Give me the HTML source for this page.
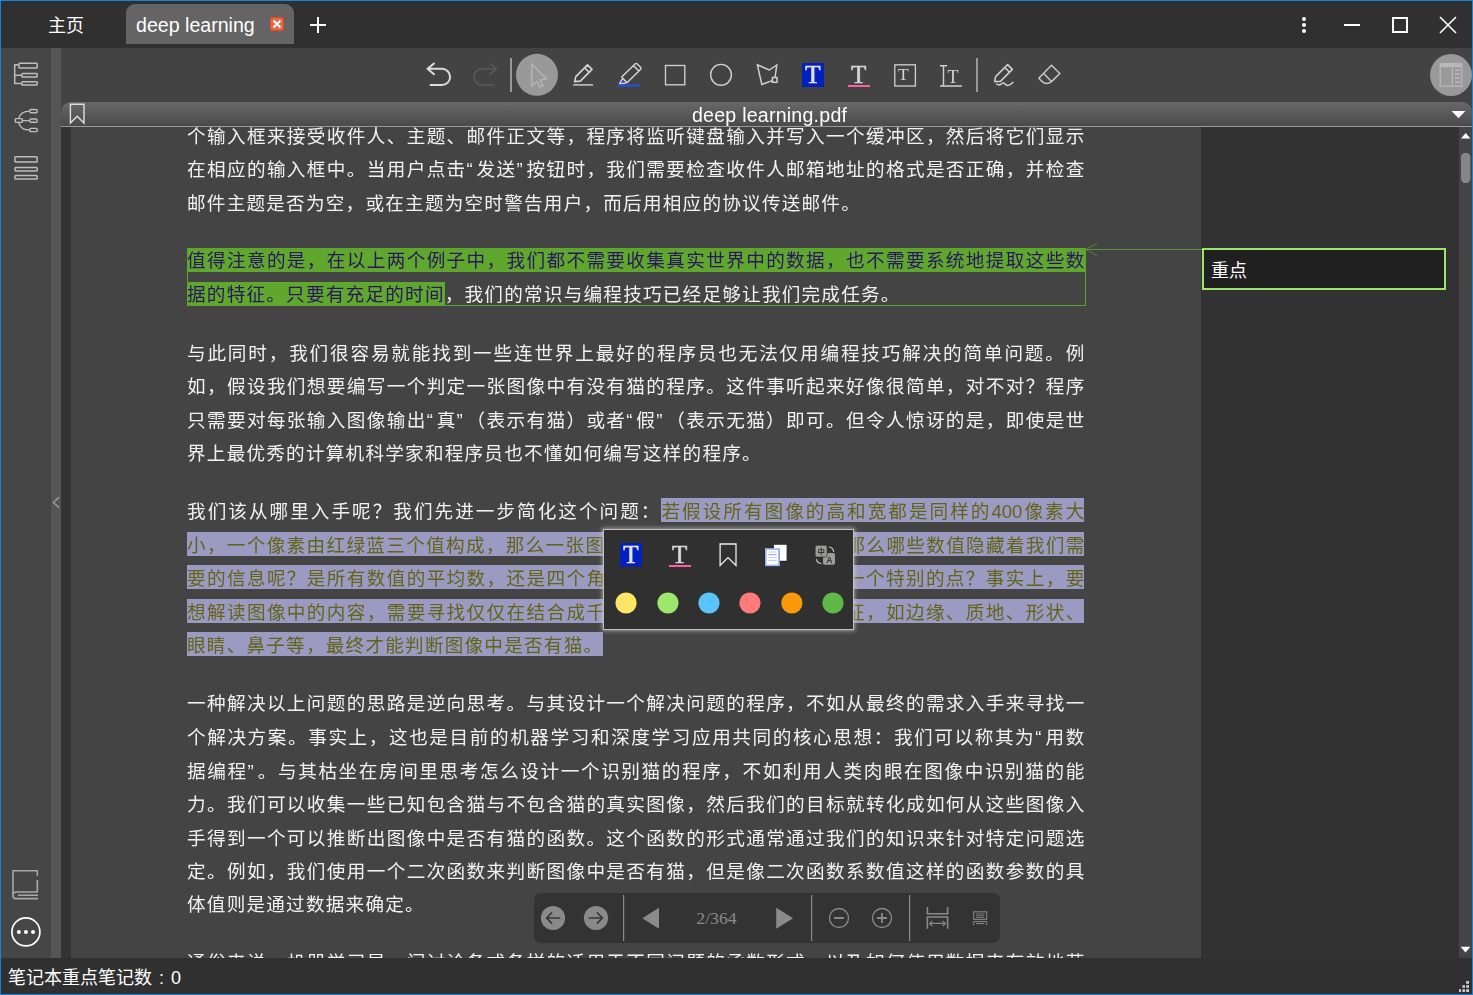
<!DOCTYPE html>
<html lang="zh-CN">
<head>
<meta charset="utf-8">
<title>deep learning.pdf</title>
<style>
html,body{margin:0;padding:0;}
body{width:1473px;height:995px;overflow:hidden;position:relative;background:#444444;font-family:"Liberation Sans","Noto Sans CJK SC",sans-serif;color:#fff;}
.abs{position:absolute;}
#frame{position:absolute;left:0;top:0;width:1471px;height:993px;border:1px solid #1883d7;z-index:100;pointer-events:none;}
#tabbar{left:1px;top:1px;width:1471px;height:47px;background:#303030;}
#tab{left:126px;top:4px;width:168px;height:40px;background:#646464;border-radius:9px 9px 0 0;}
#sidebar{left:1px;top:48px;width:50px;height:910px;background:#464646;}
#strip{left:51px;top:48px;width:10px;height:910px;background:#555555;}
#toolbar{left:61px;top:48px;width:1411px;height:54px;background:#434343;}
#titlebar{left:61px;top:102px;width:1411px;height:24px;border-radius:10px 10px 0 0;background:linear-gradient(#686868,#4a4a4a);border-bottom:1px solid #9a9a9a;}
#gutter{left:61px;top:127px;width:10px;height:831px;background:#333333;}
#page{left:71px;top:127px;width:1130px;height:831px;background:#444444;overflow:hidden;}
#txt{position:absolute;left:0;top:0;width:1130px;height:831px;will-change:transform;}
#notes{left:1201px;top:127px;width:258px;height:831px;background:#323232;}
#vscroll{left:1459px;top:127px;width:13px;height:831px;background:#444444;}
#status{left:1px;top:958px;width:1471px;height:36px;background:#303030;}
.ln{position:absolute;left:116px;width:897.3px;height:34px;line-height:34px;font-size:18.6px;text-spacing-trim:space-all;white-space:nowrap;text-align:justify;text-align-last:justify;color:#f2f2f2;font-family:"Liberation Sans","Noto Sans CJK SC",sans-serif;}
.ln.last{text-align:left;text-align-last:left;width:auto;letter-spacing:1.23px;}
.q{display:inline-block;width:8.6px;text-align:center;letter-spacing:0;}
.hl{background:#5fa82d;color:#2a1560;padding-top:1.5px;padding-bottom:0;}
.sel{background:#9a9ac3;color:#646419;padding-top:2.7px;padding-bottom:0;}

.ui{font-family:"Liberation Sans","Noto Sans CJK SC",sans-serif;white-space:nowrap;}
#t-home{left:48px;top:12.5px;font-size:18px;line-height:26px;color:#fff;}
#t-tab{left:136px;top:11.5px;font-size:19.6px;line-height:26px;color:#fff;}
#t-title{left:692px;top:102.5px;font-size:19.6px;letter-spacing:0.22px;line-height:25px;color:#fff;}
#t-status{left:8px;top:965px;font-size:18px;line-height:26px;color:#fff;}
#closebtn{left:270px;top:17px;width:12px;height:12px;border:1px solid #e8402a;border-radius:2px;background:#e36a45;}
#notebox{left:1202px;top:248px;width:240px;height:38px;border:2px solid #9be56b;background:#202020;}
#t-note{left:1211px;top:258.7px;font-size:18px;line-height:24px;color:#fff;}
#popup{left:603px;top:529px;width:249px;height:99px;background:#303030;border:1px solid #c0c0c0;box-shadow:0 0 4px 1px rgba(215,215,215,.6);}
#navbar{left:534px;top:893px;width:466px;height:50px;background:#333333;border-radius:7px;}
#t-pageno{left:696.3px;top:906.3px;font-family:"Liberation Serif",serif;font-size:17.7px;line-height:24px;color:#8a8a8a;}
.tser{font-family:"Liberation Serif",serif;}
#icons{position:absolute;left:0;top:0;width:1473px;height:995px;z-index:50;}
</style>
</head>
<body>
<div id="tabbar" class="abs"></div>
<div id="tab" class="abs"></div>
<div id="sidebar" class="abs"></div>
<div id="strip" class="abs"></div>
<div id="toolbar" class="abs"></div>
<div id="titlebar" class="abs"></div>
<div id="gutter" class="abs"></div>
<div id="page" class="abs">
<div id="txt">
<div class="ln " style="top:-7.5px">个输入框来接受收件人、主题、邮件正文等，程序将监听键盘输入并写入一个缓冲区，然后将它们显示</div>
<div class="ln " style="top:26px">在相应的输入框中。当用户点击<span class="q">“</span>发送<span class="q">”</span>按钮时，我们需要检查收件人邮箱地址的格式是否正确，并检查</div>
<div class="ln last" style="top:59.5px">邮件主题是否为空，或在主题为空时警告用户，而后用相应的协议传送邮件。</div>
<div class="ln g" style="top:116.5px"><span class="hl" style="padding-bottom:1px;padding-right:1.6px;margin-right:-1.6px">值得注意的是，在以上两个例子中，我们都不需要收集真实世界中的数据，也不需要系统地提取这些数</span></div>
<div class="ln last g" style="top:150.6px"><span class="hl">据的特征。只要有充足的时间</span>，我们的常识与编程技巧已经足够让我们完成任务。</div>
<div class="ln " style="top:209.5px">与此同时，我们很容易就能找到一些连世界上最好的程序员也无法仅用编程技巧解决的简单问题。例</div>
<div class="ln " style="top:243px">如，假设我们想要编写一个判定一张图像中有没有猫的程序。这件事听起来好像很简单，对不对？程序</div>
<div class="ln " style="top:276.5px">只需要对每张输入图像输出<span class="q">“</span>真<span class="q">”</span>（表示有猫）或者<span class="q">“</span>假<span class="q">”</span>（表示无猫）即可。但令人惊讶的是，即使是世</div>
<div class="ln last" style="top:310px">界上最优秀的计算机科学家和程序员也不懂如何编写这样的程序。</div>
<div class="ln " style="top:368px">我们该从哪里入手呢？我们先进一步简化这个问题：<span class="sel">若假设所有图像的高和宽都是同样的400像素大</span></div>
<div class="ln " style="top:401.5px"><span class="sel">小，一个像素由红绿蓝三个值构成，那么一张图像就由近50万个数值表示。那么哪些数值隐藏着我们需</span></div>
<div class="ln " style="top:435px"><span class="sel">要的信息呢？是所有数值的平均数，还是四个角的数值，抑或是图像中的某一个特别的点？事实上，要</span></div>
<div class="ln " style="top:468.5px"><span class="sel">想解读图像中的内容，需要寻找仅仅在结合成千上万的数值时才会出现的特征，如边缘、质地、形状、</span></div>
<div class="ln last" style="top:502px"><span class="sel">眼睛、鼻子等，最终才能判断图像中是否有猫<span style="letter-spacing:0;padding-right:1px">。</span></span></div>
<div class="ln " style="top:560px">一种解决以上问题的思路是逆向思考。与其设计一个解决问题的程序，不如从最终的需求入手来寻找一</div>
<div class="ln " style="top:594px">个解决方案。事实上，这也是目前的机器学习和深度学习应用共同的核心思想：我们可以称其为<span class="q">“</span>用数</div>
<div class="ln " style="top:627.5px">据编程<span class="q">”</span>。与其枯坐在房间里思考怎么设计一个识别猫的程序，不如利用人类肉眼在图像中识别猫的能</div>
<div class="ln " style="top:661px">力。我们可以收集一些已知包含猫与不包含猫的真实图像，然后我们的目标就转化成如何从这些图像入</div>
<div class="ln " style="top:694.5px">手得到一个可以推断出图像中是否有猫的函数。这个函数的形式通常通过我们的知识来针对特定问题选</div>
<div class="ln " style="top:727.5px">定。例如，我们使用一个二次函数来判断图像中是否有猫，但是像二次函数系数值这样的函数参数的具</div>
<div class="ln last" style="top:761px">体值则是通过数据来确定。</div>
<div class="ln " style="top:819px">通俗来说，机器学习是一门讨论各式各样的适用于不同问题的函数形式，以及如何使用数据来有效地获</div>
</div>
</div>
<div id="notes" class="abs"></div>
<div id="vscroll" class="abs"></div>
<div id="status" class="abs"></div>

<div id="t-home" class="abs ui">主页</div>
<div id="t-tab" class="abs ui">deep learning</div>
<div id="closebtn" class="abs"></div>
<div id="t-title" class="abs ui">deep learning.pdf</div>
<div id="notebox" class="abs"></div>
<div id="t-note" class="abs ui">重点</div>
<div id="popup" class="abs"></div>
<div id="navbar" class="abs"></div>
<div id="t-pageno" class="abs">2/364</div>
<div id="t-status" class="abs ui">笔记本重点笔记数<span style="display:inline-block;width:19px;text-align:center">:</span>0</div>
<svg id="icons" viewBox="0 0 1473 995" width="1473" height="995">
<!-- tab close x -->
<g stroke="#fff" stroke-width="2" stroke-linecap="butt" fill="none"><path d="M273.5 20.5 L280.5 27.5 M280.5 20.5 L273.5 27.5"/></g>
<!-- plus -->
<g stroke="#fff" stroke-width="2" fill="none"><path d="M310 25 H326 M318 17 V33"/></g>
<!-- window controls -->
<g fill="#fff"><circle cx="1304" cy="19" r="2"/><circle cx="1304" cy="25" r="2"/><circle cx="1304" cy="31" r="2"/></g>
<path d="M1344 25 H1360" stroke="#fff" stroke-width="2" fill="none"/>
<rect x="1393" y="18" width="14" height="14" stroke="#fff" stroke-width="2" fill="none"/>
<path d="M1440 17 L1456 33 M1456 17 L1440 33" stroke="#fff" stroke-width="1.6" fill="none"/>
<!-- toolbar: undo / redo -->
<g fill="none" stroke="#dcdcdc" stroke-width="2" stroke-linejoin="round" stroke-linecap="round">
<path d="M434 63.5 L427.5 68.8 L434 74.2 M428 68.8 H442 A8.1 8.1 0 0 1 442 85 H430.5"/>
</g>
<g fill="none" stroke="#5a5a5a" stroke-width="1.6" stroke-linejoin="round" stroke-linecap="round">
<path d="M490 63.5 L496.5 68.8 L490 74.2 M496 68.8 H482 A8.1 8.1 0 0 0 482 85 H493.5"/>
</g>
<rect x="510" y="58" width="2" height="34" fill="#999"/>
<rect x="976" y="58" width="2" height="34" fill="#999"/>
<!-- select tool -->
<circle cx="537" cy="74.8" r="21" fill="#999999"/>
<path d="M531.7 64 V86 L537.2 81.2 L540 87 L543 85.6 L540.3 80 L546.4 78.8 Z" fill="none" stroke="#b4b4b4" stroke-width="1.5" stroke-linejoin="miter"/>
<!-- pencil -->
<g fill="none" stroke="#d6d6d6" stroke-width="1.6" stroke-linejoin="round">
<path d="M574.6 81.6 L575.8 76.6 L587.5 64.9 L592 69.4 L580.3 81.1 Z M584.6 67.8 L589.1 72.3"/>
<path d="M573.2 84.9 H593" stroke-width="1.4"/>
</g>
<!-- highlighter -->
<g fill="none" stroke="#d6d6d6" stroke-width="1.4" stroke-linejoin="round">
<path d="M621.7 77 L635.3 63.8 Q636.2 63 637.1 63.8 L640.7 67.4 Q641.5 68.3 640.7 69.2 L627 82.8 Z M633.4 65.6 L638.8 71"/>
<path d="M622.8 78.2 L619.6 83.6 L624.8 83.3 L626.2 82"/>
</g>
<path d="M622.2 80.2 L625 81.6 L621.2 83.2 Z" fill="#2a5cff"/>
<rect x="617.8" y="84.6" width="22.5" height="1.9" fill="#1e50ff"/>
<!-- rectangle / ellipse / polygon -->
<rect x="665.5" y="65.5" width="19.3" height="19.3" fill="none" stroke="#d0d0d0" stroke-width="1.35"/>
<circle cx="721" cy="74.8" r="10.4" fill="none" stroke="#d0d0d0" stroke-width="1.4"/>
<g fill="none" stroke="#d0d0d0" stroke-width="1.5" stroke-linejoin="miter">
<path d="M775 77.5 L776.8 65 L769.3 70 L757.4 64.8 L761.8 84.4 L772.3 80.6"/>
<rect x="772.4" y="77.5" width="4.6" height="4.8"/>
</g>
<!-- text highlight T -->
<rect x="802" y="63" width="22" height="24" fill="#0020c0"/>
<text x="812.9" y="83" font-family="Liberation Serif, serif" font-size="25" fill="#e0e0e0" stroke="#e0e0e0" stroke-width="0.6" text-anchor="middle">T</text>
<!-- underline T -->
<text x="858.6" y="83" font-family="Liberation Serif, serif" font-size="25" fill="#d4d4d4" stroke="#d4d4d4" stroke-width="0.6" text-anchor="middle">T</text>
<rect x="848" y="85" width="22" height="2" fill="#ff5fa2"/>
<!-- boxed T -->
<rect x="894.8" y="64.8" width="20.6" height="21.2" fill="none" stroke="#d0d0d0" stroke-width="1.3"/>
<text x="903.3" y="80" font-family="Liberation Serif, serif" font-size="17.5" fill="#d4d4d4" text-anchor="middle">T</text>
<!-- I-beam T -->
<g stroke="#d0d0d0" stroke-width="1.4" fill="none"><path d="M940 65.7 H947 M943.5 65.7 V86 M940 86 H962"/></g>
<text x="953" y="83.4" font-family="Liberation Serif, serif" font-size="18" fill="#d4d4d4" text-anchor="middle">T</text>
<!-- signature pen -->
<g fill="none" stroke="#d0d0d0" stroke-width="1.5" stroke-linejoin="round" stroke-linecap="round">
<path d="M994.6 81.6 L995.6 76.6 L1007.6 64.6 L1012.4 69.4 L1000.4 81.4 Z M1004.8 67.5 L1009.6 72.3"/>
<path d="M996.5 84 Q999.5 86 1002 83.4 Q1004 82 1005.6 84.6 Q1008.5 87 1012.8 82.4"/>
</g>
<!-- eraser -->
<g fill="none" stroke="#c8c8c8" stroke-width="1.5" stroke-linejoin="round">
<path d="M1051.5 65.3 L1059.8 73.5 L1051.5 81.6 Q1046.5 85.2 1042.2 81.6 L1038.8 78.2 Z M1043.4 73.2 L1051.5 81.6"/>
</g>
<!-- right panel toggle -->
<circle cx="1451" cy="75" r="21" fill="#999999"/>
<g fill="none" stroke="#b9b9b9" stroke-width="1.2">
<rect x="1440.2" y="63.6" width="21.6" height="22.6"/>
<path d="M1440.2 66.6 H1461.8 M1452.4 66.6 V86.2" />
</g>
<rect x="1440.2" y="63.6" width="21.6" height="3" fill="#b9b9b9"/>
<g fill="#b9b9b9"><rect x="1455" y="69.4" width="5" height="1.6"/><rect x="1455" y="73.4" width="5" height="1.6"/><rect x="1455" y="77.4" width="5" height="1.6"/><rect x="1455" y="81.4" width="5" height="1.6"/></g>
<!-- title bar bookmark + dropdown -->
<path d="M70.4 104.2 H84 V123 L77.2 116.3 L70.4 123 Z" fill="none" stroke="#dedede" stroke-width="1.4" stroke-linejoin="miter"/>
<path d="M1451.6 111 H1465.4 L1458.5 118.2 Z" fill="#fff"/>
<!-- scrollbar -->
<path d="M1461 138.6 L1465.7 133 L1470.4 138.6 Z" fill="#fff"/>
<rect x="1461" y="153" width="9.4" height="30" rx="4.2" fill="#868686"/>
<path d="M1460.6 946.8 H1470.4 L1465.5 952.6 Z" fill="#fff"/>
<!-- size grip -->
<g fill="#cfcfcf">
<rect x="1466.2" y="981" width="2.8" height="2.8"/>
<rect x="1462.4" y="985.2" width="2.6" height="2.6"/><rect x="1466.2" y="985.2" width="2.8" height="2.6"/>
<rect x="1459" y="989.2" width="2" height="2.8"/><rect x="1462.4" y="989.2" width="2.6" height="2.8"/><rect x="1466.2" y="989.2" width="2.8" height="2.8"/>
</g>
<!-- sidebar: outline -->
<g fill="none" stroke="#bdbdbd" stroke-width="1.5" stroke-linejoin="round">
<rect x="18.9" y="63.2" width="18.3" height="4.8" rx="0.8"/>
<rect x="21.9" y="73.6" width="15.3" height="3.4" rx="0.8"/>
<rect x="21.9" y="81.7" width="15.3" height="3.4" rx="0.8"/>
<path d="M18.4 64.7 H14.7 V83.5 H21.4 M14.7 75.3 H21.4"/>
</g>
<!-- sidebar: mind map -->
<g fill="none" stroke="#bdbdbd" stroke-width="1.4" stroke-linejoin="round">
<rect x="15.3" y="118.6" width="7" height="3.8" rx="0.8"/>
<rect x="29.8" y="109.5" width="7.4" height="3.2" rx="1.2"/>
<rect x="29.8" y="119" width="7.4" height="3.2" rx="1.2"/>
<rect x="29.8" y="128.4" width="7.4" height="3.2" rx="1.2"/>
<path d="M18.8 118.4 Q20.5 111.4 29.6 111.1 M22.5 120.6 H29.6 M18.8 122.8 Q20.5 129.7 29.6 130"/>
</g>
<!-- sidebar: list -->
<g fill="none" stroke="#bdbdbd" stroke-width="1.5" stroke-linejoin="round">
<rect x="14.9" y="156.8" width="22.3" height="5.2" rx="0.8"/>
<rect x="14.9" y="167.5" width="22.3" height="3.4" rx="0.8"/>
<rect x="14.9" y="175.6" width="22.3" height="3.4" rx="0.8"/>
</g>
<!-- sidebar: book -->
<g fill="none" stroke="#a9a9a9" stroke-width="1.6" stroke-linejoin="round">
<path d="M37.3 875.8 V870.8 H13 V896 Q13 898.6 15.8 898.6 H38 M37.3 880 V892 H16 Q13 892.3 13 895.3 M18 895.2 H38"/>
</g>
<!-- sidebar: more -->
<circle cx="25.9" cy="931.9" r="14" fill="none" stroke="#ffffff" stroke-width="1.7"/>
<g fill="#fff"><circle cx="18.9" cy="932" r="2"/><circle cx="25.9" cy="932" r="2"/><circle cx="33" cy="932" r="2"/></g>
<!-- collapse chevron on strip -->
<path d="M59 497.3 L53.4 502.5 L59 507.8" fill="none" stroke="#a3a3a3" stroke-width="1.3"/>
<!-- highlight outline + arrow to note -->
<g fill="none" stroke="#5aa42c" stroke-width="1">
<rect x="187.5" y="249.5" width="898" height="56"/>
</g>
<g fill="none" stroke="#57943a" stroke-width="1">
<path d="M1086 249.5 H1202"/>
<path d="M1097 243.4 L1086 249.5 L1097 255.6" stroke-width="0.8"/>
</g>
<!-- nav bar -->
<circle cx="553" cy="918" r="12.1" fill="#8a8a8a"/>
<circle cx="596" cy="918" r="12.1" fill="#8a8a8a"/>
<g fill="none" stroke="#383838" stroke-width="1.7" stroke-linecap="round" stroke-linejoin="round">
<path d="M559.6 918 H546.8 M551.6 912.8 L546.6 918 L551.6 923.2"/>
<path d="M589.4 918 H602.2 M597.4 912.8 L602.4 918 L597.4 923.2"/>
</g>
<g fill="#8a8a8a">
<rect x="623" y="895" width="1.2" height="46"/>
<rect x="811" y="895" width="1.2" height="46"/>
<rect x="909" y="895" width="1.2" height="46"/>
<path d="M642.3 918.3 L659 907.8 V928.8 Z"/>
<path d="M793.1 918.3 L776.2 907.8 V928.8 Z"/>
</g>
<g fill="none" stroke="#8a8a8a" stroke-width="1.3">
<circle cx="839" cy="918" r="9.5"/>
<circle cx="882" cy="918" r="9.5"/>
<path d="M834 918 H844 M877 918 H887 M882 913 V923" stroke-width="1.8"/>
</g>
<g fill="none" stroke="#8a8a8a" stroke-width="1.6">
<path d="M927.4 907 V913.8 H947.6 V907 M927.4 928.8 V917 H947.6 V928.8"/>
<path d="M929.6 923.4 H945.4 M932.4 920.8 L929.6 923.4 L932.4 926 M942.6 920.8 L945.4 923.4 L942.6 926" stroke-width="1.1"/>
</g>
<g fill="none" stroke="#8a8a8a" stroke-width="1">
<rect x="973.7" y="911.8" width="13" height="7.6"/>
<path d="M976 914 H984.4 M976 915.8 H984.4 M976 917.6 H984.4" stroke-width="0.8"/>
<path d="M973.7 925.2 V921.6 H986.7 V925.2 M976 923.6 H984.4"/>
</g>
<!-- popup icons -->
<rect x="620" y="543.2" width="22" height="23.4" fill="#0020c0"/>
<text x="630.9" y="563" font-family="Liberation Serif, serif" font-size="25" fill="#e4e4e4" stroke="#e4e4e4" stroke-width="0.6" text-anchor="middle">T</text>
<text x="679.7" y="563" font-family="Liberation Serif, serif" font-size="25" fill="#d8d8d8" stroke="#d8d8d8" stroke-width="0.6" text-anchor="middle">T</text>
<rect x="669" y="565" width="22" height="2" fill="#ff5fa2"/>
<path d="M720.1 544 H736 V565.4 L728 557.6 L720.1 565.4 Z" fill="none" stroke="#ededed" stroke-width="1.3"/>
<!-- copy -->
<rect x="772.6" y="546.4" width="14" height="15.4" fill="#1a1a1a"/>
<rect x="773.9" y="544.8" width="12.7" height="16" fill="#ffffff"/>
<rect x="764.2" y="549.6" width="15.6" height="17.4" fill="#1c1c1c"/>
<rect x="765.8" y="549" width="13.2" height="16.4" fill="#ffffff" stroke="#9cb8ee" stroke-width="1.7"/>
<g stroke="#c3c7f4" stroke-width="1.2"><path d="M768.4 552 H776.6 M768.4 557.5 H776.6 M768.4 560.4 H776.6"/><path d="M768.4 554.6 H776.6" stroke="#9fa8f0"/></g>
<!-- translate -->
<g fill="none" stroke="#c6c6c6" stroke-width="1.2" stroke-linecap="round"><path d="M829.6 547 Q833.2 548 833.6 551.4 M816.6 559.6 Q817.2 563 820.8 563.4"/></g>
<rect x="823" y="552.9" width="12" height="11.8" rx="1.6" fill="#9c9c98"/>
<rect x="815.1" y="545.2" width="12" height="11.8" rx="1.6" fill="#9c9c98" stroke="#303030" stroke-width="0.8"/>
<text x="821.1" y="553.9" font-family="Noto Sans CJK SC, sans-serif" font-size="7.4" font-weight="bold" fill="#333" text-anchor="middle">中</text>
<text x="829.2" y="562.6" font-family="Liberation Sans, sans-serif" font-size="8.5" font-weight="bold" fill="#333" text-anchor="middle">A</text>
<!-- colour dots -->
<circle cx="626.1" cy="603" r="10.6" fill="#ffe566"/>
<circle cx="668" cy="603" r="10.6" fill="#9de86c"/>
<circle cx="709" cy="603" r="10.6" fill="#5ac4ff"/>
<circle cx="750" cy="603" r="10.6" fill="#ff7b7b"/>
<circle cx="791.9" cy="603" r="10.6" fill="#fa9a0a"/>
<circle cx="833" cy="603" r="10.6" fill="#5fb946"/>

</svg>
<div id="frame"></div>
</body>
</html>
